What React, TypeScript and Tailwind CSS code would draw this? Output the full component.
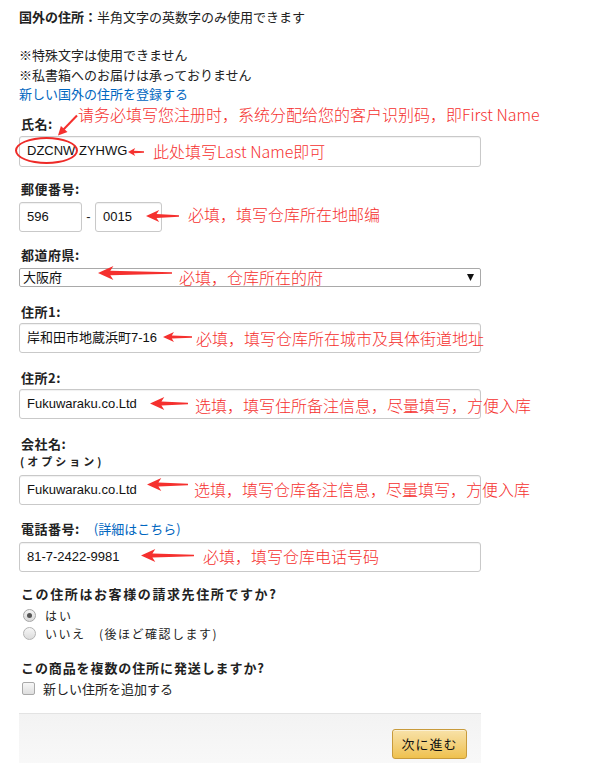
import type { ReactNode } from 'react';

const jp = "font-['Noto_Sans_CJK_JP',sans-serif]";
const note =
  "font-['Noto_Sans_CJK_SC',sans-serif] font-light text-[16px] leading-[22px] text-[#f5302e] whitespace-nowrap";

// Left-pointing red callout arrow, tapered tail
function Arrow({ w, h, className }: { w: number; h: number; className: string }) {
  const m = h / 2;
  const hb = Math.min(w * 0.45, h * 1.1);
  const pts = [
    [0, m],
    [hb, 0],
    [hb * 0.8, m - h * 0.16],
    [w, m - 0.7],
    [w, m + 0.7],
    [hb * 0.8, m + h * 0.16],
    [hb, h],
  ]
    .map((p) => p.join(','))
    .join(' ');
  return (
    <svg width={w} height={h} viewBox={`0 0 ${w} ${h}`} className={`absolute ${className}`}>
      <polygon points={pts} fill="#f5302e" />
    </svg>
  );
}

function Label({ children }: { children: ReactNode }) {
  return (
    <div className="h-4 pl-[2px] text-[13px] font-bold leading-4 tracking-[0.5px] text-[#222]">{children}</div>
  );
}

function Input({ value, className = '' }: { value: string; className?: string }) {
  return (
    <div
      className={`flex h-[30px] items-center rounded-[3px] border border-[#c9c9c9] bg-white pl-[7px] font-['Liberation_Sans','Noto_Sans_CJK_JP',sans-serif] text-[13px] text-[#111] shadow-[inset_0_1px_1px_rgba(0,0,0,0.06)] ${className}`}
    >
      {value}
    </div>
  );
}

export default function App() {
  return (
    <div className={`min-h-[763px] bg-white ${jp} text-[#222]`}>
      <div className="ml-[19px] w-[462px] pt-2">
        <div className="h-[18px] whitespace-nowrap text-[13px] leading-[18px]">
          <span className="font-bold">国外の住所：</span>半角文字の英数字のみ使用できます
        </div>

        <div className="mt-[19px] text-[13px] leading-[19.5px]">
          <div>※特殊文字は使用できません</div>
          <div>※私書箱へのお届けは承っておりません</div>
          <div className="text-[#0066c0]">新しい国外の住所を登録する</div>
        </div>

        <div className="mt-3 flex flex-col gap-4">
          {/* 氏名 */}
          <div className="flex flex-col gap-1">
            <Label>氏名:</Label>
            <div className="relative">
              <Input value="DZCNW ZYHWG" className="h-[31px]" />
              <div className="absolute left-[-4px] top-[1.5px] h-[27px] w-[63px] rounded-[50%] border-2 border-[#ee2a27]" />
              <svg width="40" height="32" viewBox="0 0 40 32" className="absolute left-[30px] top-[-30px]">
                <line x1="28" y1="9.5" x2="14.5" y2="23.5" stroke="#f5302e" strokeWidth="2" />
                <polygon points="9,29.5 18.5,26.1 11.9,19.9" fill="#f5302e" />
              </svg>
              <span className={`${note} absolute left-[59px] top-[-33px]`}>
                请务必填写您注册时，系统分配给您的客户识别码，即First Name
              </span>
              <Arrow w={16} h={8} className="left-[109px] top-[12.5px]" />
              <span className={`${note} absolute left-[134px] top-[4.5px]`}>此处填写Last Name即可</span>
            </div>
          </div>

          {/* 郵便番号 */}
          <div className="-mt-[2px] flex flex-col gap-[5px]">
            <Label>郵便番号:</Label>
            <div className="relative flex items-center">
              <Input value="596" className="w-[63px]" />
              <span className="w-[13px] text-center font-['Liberation_Sans'] text-[13px]">-</span>
              <Input value="0015" className="w-[67px]" />
              <Arrow w={33} h={12} className="left-[127px] top-[8px]" />
              <span className={`${note} absolute left-[169px] top-[1px]`}>必填，填写仓库所在地邮编</span>
            </div>
          </div>

          {/* 都道府県 */}
          <div className="-mt-px flex flex-col gap-[5px]">
            <Label>都道府県:</Label>
            <div className="relative">
              <div className="flex h-[19px] items-center justify-between rounded-[2px] border border-[#a9a9a9] bg-white pl-[3px] pr-[6px] text-[13px] text-[#111]">
                <span>大阪府</span>
                <svg width="7" height="7" viewBox="0 0 7 7">
                  <polygon points="0,0 7,0 3.5,7" fill="#111" />
                </svg>
              </div>
              <Arrow w={74} h={14} className="left-[79px] top-[-2px]" />
              <span className={`${note} absolute left-[160px] top-[-1.5px]`}>必填，仓库所在的府</span>
            </div>
          </div>

          {/* 住所1 */}
          <div className="mt-px flex flex-col gap-[3px]">
            <Label>住所1:</Label>
            <div className="relative">
              <Input value="岸和田市地蔵浜町7-16" />
              <Arrow w={29} h={10} className="left-[144px] top-[9px]" />
              <span className={`${note} absolute left-[177px] top-[4px]`}>必填，填写仓库所在城市及具体街道地址</span>
            </div>
          </div>

          {/* 住所2 */}
          <div className="mt-px flex flex-col gap-[3px]">
            <Label>住所2:</Label>
            <div className="relative">
              <Input value="Fukuwaraku.co.Ltd" />
              <Arrow w={38} h={13} className="left-[131px] top-[8px]" />
              <span className={`${note} absolute left-[176px] top-[5px]`}>
                选填，填写住所备注信息，尽量填写，方便入库
              </span>
            </div>
          </div>

          {/* 会社名 */}
          <div className="mt-px flex flex-col">
            <Label>会社名:</Label>
            <div className="h-[18px] pl-[1px] text-[11px] font-bold leading-[18px] tracking-[3px]">(オプション)</div>
            <div className="relative mt-[5px]">
              <Input value="Fukuwaraku.co.Ltd" />
              <Arrow w={41} h={13} className="left-[128px] top-[3px]" />
              <span className={`${note} absolute left-[175px] top-[3px]`}>
                选填，填写仓库备注信息，尽量填写，方便入库
              </span>
            </div>
          </div>

          {/* 電話番号 */}
          <div className="flex flex-col gap-[5px]">
            <Label>
              電話番号:<span className="ml-[14px] font-normal tracking-normal text-[#0066c0]">(詳細はこちら)</span>
            </Label>
            <div className="relative">
              <Input value="81-7-2422-9981" />
              <Arrow w={53} h={13} className="left-[122px] top-[7px]" />
              <span className={`${note} absolute left-[184px] top-[3px]`}>必填，填写仓库电话号码</span>
            </div>
          </div>

          {/* 請求先 */}
          <div className="-mt-0.5 flex flex-col gap-[5px]">
            <div className="h-4 pl-[2px] text-[13px] font-bold leading-4 tracking-[1.6px]">
              この住所はお客様の請求先住所ですか?
            </div>
            <div className="flex flex-col text-[12px]">
              <div className="flex h-[18px] items-center gap-[9px] pl-[4px]">
                <span className="flex h-[13px] w-[13px] items-center justify-center rounded-full border border-[#a6a6a6] bg-gradient-to-b from-[#f4f4f4] to-[#d8d8d8]">
                  <span className="h-[5px] w-[5px] rounded-full bg-[#555]" />
                </span>
                <span className="tracking-[2px]">はい</span>
              </div>
              <div className="flex h-[18px] items-center gap-[9px] pl-[4px]">
                <span className="h-[13px] w-[13px] rounded-full border border-[#b3b3b3] bg-gradient-to-b from-[#f6f6f6] to-[#dcdcdc]" />
                <span className="tracking-[1.5px]">いいえ　(後ほど確認します)</span>
              </div>
            </div>
          </div>

          {/* 複数住所 */}
          <div className="mt-px flex flex-col gap-1">
            <div className="h-4 pl-[2px] text-[13px] font-bold leading-4 tracking-[0.9px]">
              この商品を複数の住所に発送しますか?
            </div>
            <div className="flex h-[18px] items-center gap-[8px] pl-[3px] text-[13px]">
              <span className="h-[13px] w-[13px] rounded-[2px] border border-[#a9a9a9] bg-gradient-to-b from-[#f7f7f7] to-[#dedede]" />
              <span>新しい住所を追加する</span>
            </div>
          </div>

          <div className="-mt-px flex justify-end border-t border-[#e3e3e3] bg-gradient-to-b from-[#f3f3f3] to-[#fafafa] pb-5 pr-[14px] pt-[15px]">
            <button className="h-[30px] w-[75px] rounded-[3px] border border-[#c89b3c] bg-gradient-to-b from-[#f8e2a8] to-[#efc14c] text-[13px] tracking-[1px] text-[#111] shadow-[inset_0_1px_0_rgba(255,255,255,0.5)]">
              次に進む
            </button>
          </div>
        </div>
      </div>
    </div>
  );
}
